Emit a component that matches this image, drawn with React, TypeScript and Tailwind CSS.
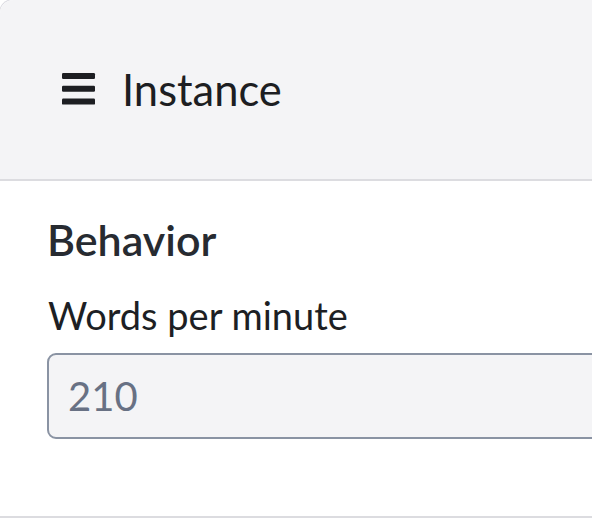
import { useState } from "react";

function MenuIcon() {
  return (
    <svg width="34" height="33" viewBox="0 0 34 33" className="shrink-0" aria-hidden>
      <rect x="0" y="0" width="33" height="6" rx="1.2" fill="#1d1e22" />
      <rect x="0" y="12.8" width="33" height="6" rx="1.2" fill="#1d1e22" />
      <rect x="0" y="25.6" width="33" height="6" rx="1.2" fill="#1d1e22" />
    </svg>
  );
}

export default function App() {
  const [wpm, setWpm] = useState("210");

  return (
    <div
      className="w-[592px] h-[518px] overflow-hidden bg-white"
      style={{ fontFamily: "Lato, 'Noto Sans', sans-serif" }}
    >
      <div className="-ml-px -mt-px w-[660px] h-[519px] rounded-tl-[14px] border-l border-t border-[#dcdce2] flex flex-col">
        <header className="h-[181px] shrink-0 bg-[#f4f4f6] rounded-tl-[14px] border-b-2 border-[#dcdce0] flex items-center pl-[62px]">
          <MenuIcon />
          <h1 className="ml-[26px] text-[43.5px] leading-[1.2] text-[#1d1e22]">Instance</h1>
        </header>

        <section className="flex-1 pl-[47px] pt-[33px] border-b-2 border-[#dcdce0]">
          <h2 className="text-[43px] leading-[1.2] font-semibold text-[#272b31]">Behavior</h2>
          <label className="block mt-[27px] pl-px text-[38px] leading-[1.2] text-[#1d1f24]">
            Words per minute
          </label>
          <input
            value={wpm}
            onChange={(e) => setWpm(e.target.value)}
            className="mt-[15px] block w-[600px] h-[86px] rounded-[9px] border-2 border-[#8a93a3] bg-[#f4f4f6] px-[19px] text-[40px] text-[#687184] outline-none"
          />
        </section>
      </div>
    </div>
  );
}
